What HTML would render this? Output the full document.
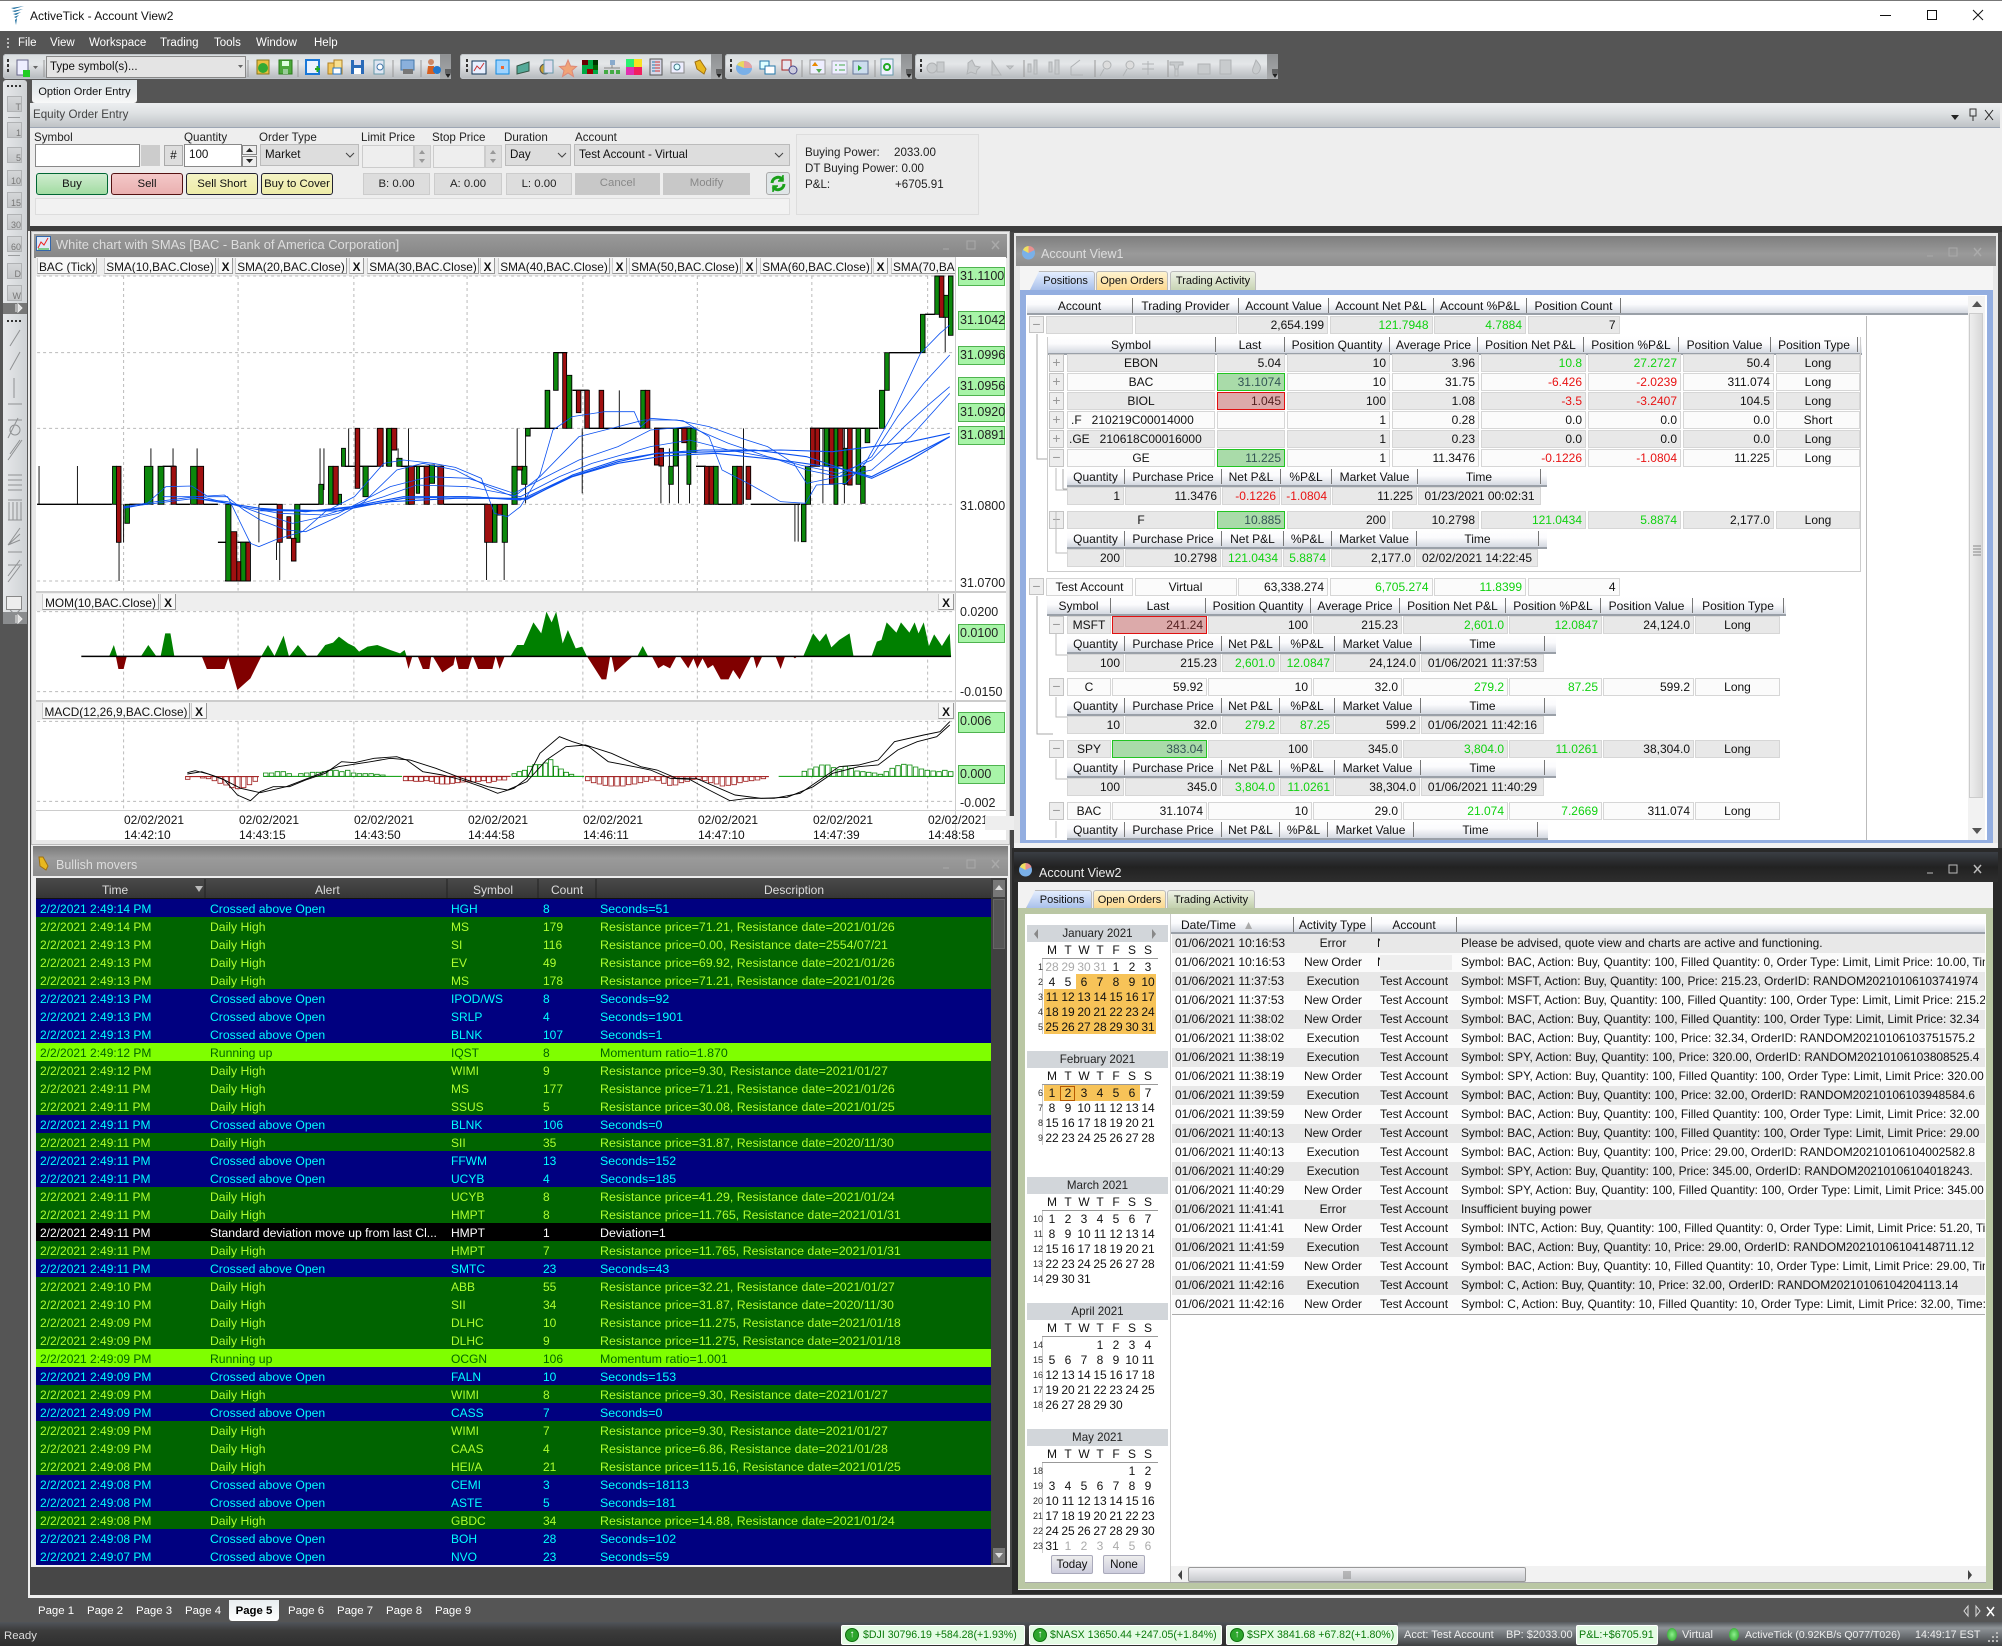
<!DOCTYPE html>
<html><head><meta charset="utf-8"><title>ActiveTick - Account View2</title>
<style>
html,body{margin:0;padding:0}
body{width:2002px;height:1646px;overflow:hidden;position:relative;background:#555;font:12px/16px "Liberation Sans",sans-serif;color:#111}
.a,.t{position:absolute;white-space:nowrap}
.a{display:block}
.tb{position:absolute;top:54px;height:25px;border-radius:3px;background:linear-gradient(#d8dcde,#e4e6e8 40%,#b4b8bc);box-shadow:inset 0 0 0 1px #c0c4c8}
.tb:after{content:"";position:absolute;right:0;top:0;bottom:0;width:11px;background:linear-gradient(#8e9092,#a8aaac)}
.lb{position:absolute;height:16px;line-height:16px;color:#222;font-size:11.6px;white-space:nowrap}
.in{position:absolute;background:#ddd;border:1px solid #bbb;box-sizing:border-box;line-height:20px;padding-left:4px;font-size:11.6px}
.btn{position:absolute;top:173px;height:22px;line-height:20px;box-sizing:border-box;text-align:center;border-radius:3px;font-size:11.4px;white-space:nowrap}
.win{position:absolute;height:26px;line-height:26px;color:#ddd;font-size:12.5px;white-space:nowrap}
.lg{position:absolute;top:258px;height:16px;line-height:18px;background:#f8f8f8;border-right:1px solid #999;border-bottom:1px solid #999;border-left:1px solid #ccc;padding:0 1px;overflow:hidden;box-sizing:border-box;text-align:center;white-space:nowrap;font-size:11.8px}
.lx{font-weight:bold;text-align:center}
.ax{position:absolute;left:960px;line-height:16px;color:#222;font-size:12.5px}
.gb{position:absolute;left:958px;width:47px;height:19px;background:#a8f4a8;border:1px solid #4fb34f;box-sizing:border-box;line-height:17px;padding-left:1px;color:#222;font-size:12.5px}
.dt{position:absolute;text-align:left;line-height:15px;color:#111;white-space:nowrap}
.tab{position:absolute;height:19px;line-height:19px;text-align:center;border:1px solid #bbb;border-bottom:0;box-sizing:border-box;border-radius:3px 3px 0 0;font-size:11px;white-space:nowrap}
.r{height:18px;position:relative;line-height:20px}
.r i{position:absolute;font-style:normal;white-space:nowrap;left:4px}
.r i:nth-child(2){left:174px;font-size:12.2px}.r i:nth-child(3){left:415px}.r i:nth-child(4){left:507px}.r i:nth-child(5){left:564px;font-size:12.4px}
.B{background:#000080;color:#0ff}.G{background:#006400;color:#adff2f}.L{background:#7fff00;color:#006400}.K{background:#000;color:#fff}
.g{position:absolute;display:grid;height:18px;column-gap:2px;left:1067px;line-height:17px}
.g>i{font-style:normal;border:1px solid #d6d6d6;box-sizing:border-box;text-align:right;padding:0 3px;overflow:hidden;white-space:nowrap}
.o{background:#e8e8e8}.e{background:#fbfbfb}
.g.o,.g.e{background:none}
.g.o>i{background:#e8e8e8}.g.e>i{background:#fbfbfb}
.c,.g>i.c{text-align:center}
.g>i.u{color:#0fd20f}.g>i.d{color:#e81212}
.g>i.hg{background:#a9dba9;border-color:#22c422;color:#355}
.g>i.hr{background:#dcaaaa;border-color:#e01010;color:#522}
.h{position:absolute;display:grid;height:17px;left:1067px;line-height:16px;background:linear-gradient(#fff,#fbfbfd 45%,#d4d8e0);border-bottom:2px solid #9aa0a8;box-sizing:content-box}
.h>i{font-style:normal;text-align:center;border-right:1px solid #777;overflow:hidden;white-space:nowrap;height:15px;line-height:17px;margin-top:1px}
.bx{position:absolute;left:1049px;width:15px;height:18px;background:#ededed;border:1px solid #c4c4c4;box-sizing:border-box;color:#999;text-align:center;line-height:15px;font-size:14px}
.cm{position:absolute;left:1027px;width:141px;height:17px;background:#d2d6da;text-align:center;line-height:17px;color:#222;font-size:11.6px}
.cd{position:absolute;left:1044px;width:112px;display:grid;grid-template-columns:repeat(7,16px);text-align:center;line-height:15px;height:15px}
.cd i{font-style:normal}
.cd .m{color:#aaa}
.wk{position:absolute;left:1032px;width:11px;text-align:right;font-size:9px;line-height:15px;color:#333;border-right:0}
.hl{position:absolute;background:#f7c358}
.row2{position:absolute;left:1172px;width:813px;height:19px;line-height:19px;overflow:hidden;white-space:nowrap}
.row2 i{font-style:normal;position:absolute}
.row2 i:nth-child(1){left:3px}.row2 i:nth-child(2){left:122px;width:78px;text-align:center}.row2 i:nth-child(3){left:208px}.row2 i:nth-child(4){left:289px;font-size:11.9px}
.pg{position:absolute;top:1603px;color:#fff;line-height:16px;font-size:11.4px;white-space:nowrap}
.st{position:absolute;top:1625px;height:20px;line-height:20px;color:#fff;white-space:nowrap;font-size:11px}
.sb{background:#e4fbe4;color:#0a7a0a;border-radius:2px;border:1px solid #fff;box-sizing:border-box;line-height:18px;overflow:hidden}
.up{position:absolute;left:3px;top:2px;width:14px;height:14px;border-radius:50%;background:#2da62d;border:1px solid #0e6e0e;box-sizing:border-box;color:#fff;line-height:12px;text-align:center;font-size:10px;font-weight:bold}
.dot{position:absolute;top:1628px;width:10px;height:13px;border-radius:50%;background:radial-gradient(#8ef08e,#1e9a1e)}
.rl{position:absolute;left:7px;width:15px;height:16px;background:linear-gradient(#d4d6d8,#c4c6c8);border:1px solid #b0b2b4;box-sizing:border-box;font-size:9px;line-height:20px;text-align:right;color:#777;overflow:visible}
.hx{position:absolute;left:8px;width:12px;height:1px;background:#9a9c9e}
svg{position:absolute;display:block}
</style></head><body>

<!-- title bar -->
<div class="a" style="left:0;top:0;width:2002px;height:31px;background:#fff;border-top:1px solid #777;box-sizing:border-box"></div>
<svg style="left:9px;top:6px" width="16" height="20" viewBox="0 0 16 20"><path d="M2 2 15 0 5 3zM3 5 14 3 6 6zM4 8 12 6 7 9zM5 11 10 9 7 12zM6 14 8 12 7 19z" fill="#1f6f9f"/></svg>
<div class="t" style="left:30px;top:8px;line-height:16px;color:#111">ActiveTick - Account View2</div>
<div class="a" style="left:1880px;top:15px;width:11px;height:1px;background:#111"></div>
<div class="a" style="left:1927px;top:10px;width:10px;height:10px;border:1px solid #111;box-sizing:border-box"></div>
<svg style="left:1972px;top:9px" width="12" height="12"><path d="M1 1 11 11M11 1 1 11" stroke="#111" fill="none"/></svg>

<!-- menu -->
<svg style="left:7px;top:37px" width="3" height="12"><path d="M1 1v2M1 5v2M1 9v2" stroke="#ddd" stroke-width="1.5"/></svg>
<div class="t" style="left:18px;top:35px;color:#fff;font-size:11.5px">File</div>
<div class="t" style="left:50px;top:35px;color:#fff;font-size:11.5px">View</div>
<div class="t" style="left:89px;top:35px;color:#fff;font-size:11.5px">Workspace</div>
<div class="t" style="left:160px;top:35px;color:#fff;font-size:11.5px">Trading</div>
<div class="t" style="left:214px;top:35px;color:#fff;font-size:11.5px">Tools</div>
<div class="t" style="left:256px;top:35px;color:#fff;font-size:11.5px">Window</div>
<div class="t" style="left:314px;top:35px;color:#fff;font-size:11.5px">Help</div>

<!-- toolbars -->
<div class="tb" style="left:3px;width:448px"></div>
<div class="tb" style="left:460px;width:262px"></div>
<div class="tb" style="left:725px;width:187px"></div>
<div class="tb" style="left:915px;width:363px"></div>
<div class="a" style="left:46px;top:56px;width:200px;height:22px;background:#e4e4e4;border:1px solid #888;box-sizing:border-box;line-height:20px;padding-left:3px;color:#111;font-size:11.5px">Type symbol(s)...</div>
<svg style="left:0;top:50px" width="1300" height="32" viewBox="0 0 1300 32">
<path d="M8 9v3M8 14v3M8 19v3M467 9v3M467 14v3M467 19v3M731 9v3M731 14v3M731 19v3M921 9v3M921 14v3M921 19v3" stroke="#333" stroke-width="2"/>
<path d="M44 10v17M248 10v17M298 10v17M393 10v17M421 10v17M802 10v17M875 10v17M1024 10v17M1095 10v17M1168 10v17" stroke="#999"/>
<path d="M238 15l5 0-2.5 3z" fill="#666"/>
<path d="M445 20h6M445 22h6M446 24l2 3 2-3zM716 20h6M716 22h6M717 24l2 3 2-3zM906 20h6M906 22h6M907 24l2 3 2-3zM1272 20h6M1272 22h6M1273 24l2 3 2-3z" stroke="#222" fill="#222"/>
<rect x="17" y="10" width="11" height="15" fill="#eef" stroke="#668"/><rect x="23" y="20" width="7" height="7" fill="#2c2"/><path d="M33 16h5l-2.5 3z" fill="#666"/>
<rect x="257" y="10" width="12" height="14" fill="#eac040" stroke="#86761c"/><circle cx="263" cy="18" r="5" fill="#3a3"/>
<rect x="279" y="10" width="13" height="14" fill="#4ca83c" stroke="#2a7a1a"/><rect x="282" y="11" width="7" height="5" fill="#dfd"/><rect x="283" y="19" width="5" height="5" fill="#9c9"/>
<rect x="306" y="10" width="13" height="14" fill="#eaf2ff" stroke="#1a78d8" stroke-width="2"/><path d="M315 19h5M317.500 16v6" stroke="#2a2" stroke-width="2"/>
<rect x="328" y="13" width="8" height="11" fill="#f2c860" stroke="#b08020"/><rect x="334" y="10" width="8" height="14" fill="#f8e090" stroke="#b08020"/><rect x="333" y="18" width="8" height="6" fill="#fff" stroke="#27c"/>
<rect x="351" y="10" width="13" height="14" fill="#2a6ab8"/><rect x="354" y="10" width="7" height="5" fill="#dde"/><rect x="354" y="18" width="7" height="6" fill="#fff"/>
<rect x="374" y="10" width="10" height="14" fill="#dfe6f2" stroke="#69a"/><circle cx="380" cy="17" r="3" fill="#fff" stroke="#47a"/>
<rect x="401" y="10" width="13" height="10" fill="#8ab0dc" stroke="#47a"/><rect x="403" y="19" width="10" height="5" fill="#777"/>
<circle cx="431" cy="12" r="3" fill="#c86"/><path d="M427 24l1-8h6l1 8z" fill="#d66020"/><circle cx="437" cy="20" r="4" fill="#27c"/>
<rect x="472" y="11" width="14" height="13" fill="#e8f0ff" stroke="#135"/><path d="M474 21l3-5 3 3 4-6" stroke="#c33" fill="none"/>
<rect x="496" y="10" width="13" height="14" fill="#9fd4ff" stroke="#18d"/><rect x="501" y="16" width="3" height="3" fill="#e63"/>
<path d="M517 16l12-4v9l-12 3z" fill="#5a9" stroke="#354"/>
<circle cx="545" cy="19" r="5" fill="#c8a030" stroke="#555"/><rect x="544" y="10" width="9" height="13" fill="#dde" stroke="#69a"/>
<path d="M568 10l2.500 6 6 .5-4.500 4 1.500 6-5.500-3.500-5.500 3.500 1.500-6-4.500-4 6-.5z" fill="#f0a478" stroke="#d87"/>
<rect x="582" y="10" width="16" height="14" fill="#0a4"/><rect x="582" y="10" width="6" height="5" fill="#600"/><rect x="593" y="15" width="5" height="5" fill="#060"/><rect x="587" y="19" width="6" height="5" fill="#900"/><rect x="593" y="10" width="5" height="5" fill="#030"/>
<rect x="610" y="10" width="5" height="5" fill="#8ac"/><rect x="604" y="20" width="4" height="4" fill="#4a4"/><rect x="610" y="20" width="4" height="4" fill="#4a4"/><rect x="616" y="20" width="4" height="4" fill="#4a4"/><path d="M612 15v3M604 18h16" stroke="#888"/>
<rect x="626" y="9" width="8" height="8" fill="#2cf070"/><rect x="634" y="9" width="8" height="8" fill="#f8e020"/><rect x="626" y="17" width="8" height="8" fill="#e030b0"/><rect x="634" y="17" width="8" height="8" fill="#f02060"/>
<rect x="650" y="9" width="12" height="16" fill="#d8d8e8" stroke="#555"/><path d="M652 12h8M652 15h8M652 18h8M652 21h8" stroke="#c33"/><path d="M652 12h3M652 15h3M652 18h3M652 21h3" stroke="#27a"/>
<rect x="671" y="12" width="13" height="11" fill="#eef" stroke="#888"/><circle cx="677" cy="17" r="3" fill="#dff" stroke="#478"/>
<path d="M695 12l5-2 6 9-2 5-7-5z" fill="#e8b820" stroke="#a07010"/>
<ellipse cx="744" cy="18" rx="8" ry="7" fill="#7ab0e8"/><path d="M744 18V11a8 7 0 0 1 8 7z" fill="#e6a0a0"/><path d="M744 18l-7-3a8 7 0 0 1 7-4z" fill="#e8d860"/>
<rect x="760" y="11" width="9" height="8" fill="#dff" stroke="#27a"/><rect x="765" y="16" width="10" height="8" fill="#fff" stroke="#27a"/>
<rect x="782" y="10" width="9" height="10" fill="#e6e6f0" stroke="#a22"/><circle cx="793" cy="20" r="4" fill="#ccd" stroke="#448"/>
<rect x="810" y="10" width="15" height="14" fill="#eef" stroke="#999"/><path d="M815 12l3 4h-6zM819 23l3-4h-6z" fill="#5a5"/><path d="M815 12l3 4h-6z" fill="#e80"/>
<rect x="832" y="11" width="15" height="13" fill="#eef" stroke="#aab"/><path d="M835 15h2M839 15h6M835 20h2M839 20h6" stroke="#4a4"/>
<rect x="853" y="11" width="15" height="13" fill="#cde" stroke="#679"/><path d="M858 15l4 3-4 3z" fill="#2a2"/>
<rect x="881" y="9" width="12" height="16" fill="#eef" stroke="#69a"/><circle cx="887" cy="17" r="3" fill="none" stroke="#2a2" stroke-width="2"/>
<g fill="#c8cbcd" stroke="#b0b3b5">
<circle cx="932" cy="18" r="5"/><rect x="937" y="12" width="7" height="10"/>
<path d="M968 13l4-3 3 6 5 1-3 3-1 4-5-2-4 2 1-5z"/>
<path d="M992 25v-14l9 14zM1007 16h6l-3 3z"/>
<rect x="1028" y="14" width="3" height="8"/><rect x="1034" y="10" width="3" height="14"/>
<rect x="1049" y="12" width="3" height="10"/><rect x="1055" y="10" width="4" height="14"/>
<path d="M1071 25v-8l9-7" fill="none"/><path d="M1071 25h12" fill="none"/>
<circle cx="1107" cy="15" r="4" fill="#ddd"/><path d="M1104 19l-4 7" fill="none"/>
<circle cx="1130" cy="15" r="4" fill="#ddd"/><path d="M1127 19l-4 7" fill="none"/>
<path d="M1142 14h12M1142 19h12M1148 11v14" fill="none"/>
<path d="M1170 12h13v3h-4l-1 4h-3l-1-4h-4zM1175 19h3v7h-3z"/>
<rect x="1198" y="14" width="12" height="10"/><rect x="1220" y="10" width="11" height="14"/>
<path d="M1256 10c4 5 6 7 3 12-3 4-8 1-6-4z"/>
</g>
</svg>

<!-- left rail -->
<div class="a" style="left:3px;top:80px;width:24px;height:228px;background:linear-gradient(90deg,#e6e8ea,#cfd2d5);border-radius:3px 3px 0 0"></div>
<div class="a" style="left:3px;top:303px;width:24px;height:11px;background:#777"></div>
<div class="a" style="left:3px;top:314px;width:24px;height:298px;background:linear-gradient(90deg,#e6e8ea,#cfd2d5)"></div>
<div class="a" style="left:3px;top:612px;width:24px;height:13px;background:#8a8c8e"></div>
<svg style="left:7px;top:85px" width="16" height="3"><path d="M0 1h2M4 1h2M8 1h2M12 1h2" stroke="#333" stroke-width="2"/></svg>
<svg style="left:7px;top:320px" width="16" height="3"><path d="M0 1h2M4 1h2M8 1h2M12 1h2" stroke="#333" stroke-width="2"/></svg>
<div class="rl" style="top:96px">T</div><div class="rl" style="top:122px">1</div><div class="rl" style="top:147px">5</div><div class="rl" style="top:170px">10</div><div class="rl" style="top:192px">15</div><div class="rl" style="top:214px">30</div><div class="rl" style="top:236px">60</div><div class="rl" style="top:263px">D</div><div class="rl" style="top:285px">W</div>
<div class="hx" style="top:117px"></div><div class="hx" style="top:255px"></div>
<svg style="left:4px;top:320px" width="22" height="310" viewBox="0 0 22 310" fill="none" stroke="#8f9193">
<path d="M6 26 16 10M6 50 16 32M10 58V78M4 84h14M4 100h14M4 118 14 98M6 110a5 5 0 1 0 10 0a5 5 0 1 0-10 0M4 140l14-20M6 134l10-14M4 155h14M4 160h14M4 165h14M4 170h14M4 180h14M4 200h14M5 182v18M9 182v18M13 182v18M17 182v18M4 225 16 208M4 225 16 214M4 225 16 220M4 232h14M4 245h14M4 256 16 240M4 262 16 246M4 278h14"/>
<circle cx="11" cy="288" r="5"/>
</svg>
<div class="a" style="left:6px;top:596px;width:16px;height:14px;background:#eee;border:1px solid #888;box-sizing:border-box"></div>
<svg style="left:15px;top:303px" width="8" height="10"><path d="M1 1v8M3 1l4 4-4 4z" stroke="#eee" fill="#ddd"/></svg>
<svg style="left:15px;top:614px" width="8" height="10"><path d="M1 1v8M3 1l4 4-4 4z" stroke="#eee" fill="#ddd"/></svg>

<!-- option tab -->
<div class="a" style="left:32px;top:80px;width:105px;height:23px;background:linear-gradient(#dfe6ea,#e8ecee 50%,#f8f8f8);text-align:center;line-height:24px;border-radius:0 0 3px 3px;color:#111;font-size:11px">Option Order Entry</div>

<!-- equity panel -->
<div class="a" style="left:30px;top:103px;width:1972px;height:123px;background:#eee"></div>
<div class="a" style="left:30px;top:103px;width:1970px;height:25px;background:linear-gradient(#eceef0,#dfe2e4 40%,#bfc3c6);border-bottom:1px solid #9da6b4;box-sizing:border-box"></div>
<div class="t" style="left:33px;top:107px;color:#444;font-size:11.6px">Equity Order Entry</div>
<svg style="left:1950px;top:108px" width="45" height="14" fill="#222"><path d="M1 7h8l-4 5z"/><path d="M20 1h6v7h-6zM23 8v5" stroke="#333" fill="none"/><path d="M35 2l8 10M43 2l-8 10" stroke="#222" fill="none"/></svg>

<div class="lb" style="left:34px;top:130px">Symbol</div>
<div class="lb" style="left:184px;top:130px">Quantity</div>
<div class="lb" style="left:259px;top:130px">Order Type</div>
<div class="lb" style="left:361px;top:130px">Limit Price</div>
<div class="lb" style="left:432px;top:130px">Stop Price</div>
<div class="lb" style="left:504px;top:130px">Duration</div>
<div class="lb" style="left:575px;top:130px">Account</div>

<div class="in" style="left:35px;top:144px;width:105px;height:23px;background:#fff;border-color:#888"></div>
<div class="in" style="left:141px;top:145px;width:19px;height:21px;background:#ccc;border-color:#ccc"></div>
<div class="in" style="left:164px;top:145px;width:19px;height:21px;background:#ddd;text-align:center;padding:0;border-color:#aaa">#</div>
<div class="in" style="left:184px;top:144px;width:58px;height:23px;background:#fff;border-color:#888">100</div>
<div class="in" style="left:242px;top:145px;width:15px;height:10px;background:#eee;border-color:#888"></div><div class="in" style="left:242px;top:156px;width:15px;height:11px;background:#eee;border-color:#888"></div>
<svg style="left:242px;top:145px" width="15" height="22"><path d="M4 7l3.500-4 3.500 4zM4 14l3.500 4 3.500-4z" fill="#222"/></svg>
<div class="in" style="left:260px;top:144px;width:99px;height:22px;background:#ddd">Market</div>
<div class="in" style="left:362px;top:145px;width:52px;height:23px;background:#eee;border-color:#ccc"></div><div class="in" style="left:414px;top:145px;width:17px;height:23px;background:#ddd;border-color:#ccc"></div>
<div class="in" style="left:433px;top:145px;width:52px;height:23px;background:#eee;border-color:#ccc"></div><div class="in" style="left:485px;top:145px;width:17px;height:23px;background:#ddd;border-color:#ccc"></div>
<svg style="left:414px;top:145px" width="90" height="23"><path d="M5 9l3-4 3 4zM5 14l3 4 3-4zM76 9l3-4 3 4zM76 14l3 4 3-4z" fill="#999"/></svg>
<div class="in" style="left:505px;top:144px;width:66px;height:22px;background:#ddd">Day</div>
<div class="in" style="left:574px;top:144px;width:216px;height:22px;background:#ddd">Test Account - Virtual</div>
<svg style="left:340px;top:150px" width="460" height="10" fill="none" stroke="#444"><path d="M6 3l4 4 4-4M218 3l4 4 4-4M435 3l4 4 4-4"/></svg>

<div class="btn" style="left:36px;width:72px;background:linear-gradient(#cfeccf,#a2dca2);border:1px solid #063;color:#111">Buy</div>
<div class="btn" style="left:111px;width:72px;background:linear-gradient(#f3c8c8,#eab0b0);border:1px solid #511;color:#111">Sell</div>
<div class="btn" style="left:186px;width:72px;background:linear-gradient(#f4f3c4,#eeeca8);border:1px solid #223;color:#111">Sell Short</div>
<div class="btn" style="left:261px;width:72px;background:linear-gradient(#f4f3c4,#eeeca8);border:1px solid #223;color:#111">Buy to Cover</div>
<div class="btn" style="left:363px;width:67px;background:#ddd;border:1px solid #ccc;border-radius:0;color:#222">B: 0.00</div>
<div class="btn" style="left:434px;width:68px;background:#ddd;border:1px solid #ccc;border-radius:0;color:#222">A: 0.00</div>
<div class="btn" style="left:506px;width:66px;background:#ddd;border:1px solid #ccc;border-radius:0;color:#222">L: 0.00</div>
<div class="btn" style="left:575px;width:85px;background:#c8c8c8;border-radius:0;color:#888">Cancel</div>
<div class="btn" style="left:663px;width:87px;background:#c8c8c8;border-radius:0;color:#888">Modify</div>
<div class="a" style="left:766px;top:172px;width:24px;height:23px;background:#e0e6e8;border:1px solid #aaa;box-sizing:border-box;border-radius:3px"></div>
<svg style="left:770px;top:175px" width="16" height="17" fill="none" stroke="#1aa01a" stroke-width="3"><path d="M2 8a6 6 0 0 1 11-3M14 9a6 6 0 0 1-11 3"/><path d="M13 0v6h-5M3 17v-6h5" stroke-width="1.500" fill="#1aa01a"/></svg>
<div class="a" style="left:35px;top:198px;width:755px;height:17px;background:#f2f2f2;border:1px solid #ddd;box-sizing:border-box"></div>
<div class="a" style="left:796px;top:134px;width:183px;height:81px;background:#ececec;border:1px solid #ddd;box-sizing:border-box"></div>
<div class="lb" style="left:805px;top:145px">Buying Power:</div><div class="lb" style="left:894px;top:145px">2033.00</div>
<div class="lb" style="left:805px;top:161px">DT Buying Power: 0.00</div>
<div class="lb" style="left:805px;top:177px">P&amp;L:</div><div class="lb" style="left:895px;top:177px">+6705.91</div>

<!-- MDI frame -->
<div class="a" style="left:30px;top:226px;width:1972px;height:1371px;background:#474747"></div>
<div class="a" style="left:28px;top:231px;width:2px;height:1366px;background:#eee"></div>
<div class="a" style="left:28px;top:1595px;width:1974px;height:3px;background:#eee"></div>
<div class="a" style="left:0;top:624px;width:28px;height:1000px;background:#555"></div>
<div class="a" style="left:30px;top:226px;width:1972px;height:6px;background:#3c3c3c"></div>

<!-- chart window -->
<div class="a" style="left:31px;top:231px;width:979px;height:614px;background:#e8e8e8;box-shadow:inset 0 0 0 1px #bbb"></div>
<div class="a" style="left:34px;top:234px;width:973px;height:24px;background:linear-gradient(#999,#868686)"></div>
<svg style="left:36px;top:236px" width="15" height="15"><rect x=".5" y=".5" width="14" height="14" fill="#dfe9f8" stroke="#36a"/><path d="M2 12l3-6 3 3 4-7" stroke="#e22" fill="none"/><path d="M2 13h11" stroke="#2a2"/></svg>
<div class="win" style="left:56px;top:232px;color:#ddd;font-size:12.9px">White chart with SMAs [BAC - Bank of America Corporation]</div>
<svg style="left:940px;top:238px" width="62" height="14" stroke="#aaa" fill="none"><path d="M3 11h6"/><rect x="27" y="3" width="8" height="8"/><path d="M52 3l7 8M59 3l-7 8" stroke-width="1.500"/></svg>

<div class="a" style="left:36px;top:257px;width:970px;height:583px;background:#fff"></div>
<div class="a" style="left:36px;top:257px;width:919px;height:19px;background:#eee"></div>
<div class="lg" style="left:37px;width:60px">BAC (Tick)</div>
<div class="lg" style="left:104px;width:112px">SMA(10,BAC.Close)</div><div class="lg lx" style="left:218px;width:15px">X</div>
<div class="lg" style="left:235px;width:112px">SMA(20,BAC.Close)</div><div class="lg lx" style="left:349px;width:15px">X</div>
<div class="lg" style="left:367px;width:112px">SMA(30,BAC.Close)</div><div class="lg lx" style="left:480px;width:15px">X</div>
<div class="lg" style="left:498px;width:112px">SMA(40,BAC.Close)</div><div class="lg lx" style="left:612px;width:15px">X</div>
<div class="lg" style="left:629px;width:112px">SMA(50,BAC.Close)</div><div class="lg lx" style="left:742px;width:15px">X</div>
<div class="lg" style="left:760px;width:112px">SMA(60,BAC.Close)</div><div class="lg lx" style="left:873px;width:15px">X</div>
<div class="lg" style="left:891px;width:64px;text-align:left;border-right:0">SMA(70,BAC.Close)</div>

<svg style="left:0;top:230px" width="1020" height="370" viewBox="0 0 1568 1110" preserveAspectRatio="none">
<path vector-effect="non-scaling-stroke" fill="none" stroke="#bbb" stroke-dasharray="3 3" d="M57 138H1468M57 368H1468M57 595H1468M57 823H1468M57 1053H1468M190 138V1082M366 138V1082M544 138V1082M718 138V1082M896 138V1082M1072 138V1082M1248 138V1082M1426 138V1082"/>
<path vector-effect="non-scaling-stroke" fill="none" stroke="#000" stroke-width=".9" d="M60 708V823M119 708V823M183 937V1053M190 823V937M232 655V709M266 655V709M303 655V709M398 823V937M430 937V1050M425 937V990M492 655V823M498 655V780M536 595V709M550 595V775M594 595V709M612 655V709M628 595V709M748 937V1050M775 937V1050M795 595V709M808 595V820M845 481V595M895 595V790M925 481V595M952 481V595M1016 655V820M1029 655V820M1043 595V820M1060 595V820M1143 595V823M1222 823V935M1227 823V935M1265 595V820M1298 595V820M1453 253V366"/>
<path vector-effect="non-scaling-stroke" fill="none" stroke="#000" stroke-width="1.300" d="M57 823H172M199 823H222M250 709H270M271 823H292M313 823H335M335 937H347M398 823H426M461 823H490M530 709H580M682 823H750M815 595H838M880 481H905M905 595H985M1070 709H1085M1104 823H1125M1154 823H1230M1337 595H1350M1367 368H1415M1422 253H1437M616 709H680M346 1052H385M365 937H385M1006 595H1070M1245 595H1338M851 368H872M836 595H858"/>
<path vector-effect="non-scaling-stroke" fill="#0c880c" stroke="#000" stroke-width=".9" d="M173 709h6v114h-6zM192 823h7v57h-7zM222 709h13v114h-13zM243 709h9v114h-9zM293 709h10v114h-10zM347 823h8v230h-8zM370 937h8v116h-8zM453 823h8v114h-8zM490 763h7v60h-7zM505 709h7v114h-7zM518 793h7v30h-7zM525 655h6v54h-6zM558 709h8v91h-8zM595 595h7v114h-7zM610 685h8v24h-8zM624 709h6v114h-6zM640 709h5v81h-5zM660 705h8v55h-8zM757 823h7v114h-7zM772 823h8v114h-8zM787 709h8v114h-8zM802 709h8v54h-8zM808 595h7v23h-7zM838 481h7v114h-7zM851 368h7v113h-7zM871 436h8v159h-8zM985 481h7v114h-7zM1028 709h7v54h-7zM1035 595h7v113h-7zM1056 595h6v168h-6zM1062 595h8v73h-8zM1097 709h7v114h-7zM1126 709h7v114h-7zM1232 823h7v112h-7zM1238 709h8v114h-8zM1267 595h7v114h-7zM1282 595h6v228h-6zM1296 655h6v108h-6zM1316 595h7v168h-7zM1323 709h7v111h-7zM1330 595h7v43h-7zM1352 481h8v114h-8zM1360 368h7v113h-7zM1415 253h7v115h-7zM1437 138h7v115h-7zM1450 196h8v66h-8zM1458 138h7v178h-7z"/>
<path vector-effect="non-scaling-stroke" fill="#a01010" stroke="#000" stroke-width=".9" d="M179 709h7v228h-7zM263 709h8v114h-8zM303 709h10v114h-10zM355 905h9v148h-9zM364 995h6v58h-6zM378 937h7v116h-7zM426 823h8v114h-8zM441 860h6v65h-6zM448 925h7v68h-7zM512 709h8v114h-8zM546 595h7v180h-7zM580 595h9v114h-9zM602 595h8v65h-8zM628 709h9v114h-9zM652 709h8v114h-8zM673 709h9v114h-9zM745 823h12v114h-12zM765 823h7v32h-7zM795 709h8v11h-8zM865 368h6v227h-6zM886 481h7v67h-7zM899 481h7v114h-7zM921 481h7v114h-7zM992 481h7v114h-7zM1006 595h7v110h-7zM1013 655h7v53h-7zM1048 595h8v43h-8zM1083 709h7v114h-7zM1090 709h7v114h-7zM1133 709h8v114h-8zM1147 709h7v99h-7zM1246 595h7v114h-7zM1253 595h7v114h-7zM1275 595h7v168h-7zM1288 595h8v113h-8zM1303 595h7v170h-7zM1444 138h7v124h-7z"/>
<g fill="none" stroke="#0a50f0" stroke-width=".8">
<polyline vector-effect="non-scaling-stroke" points="190,835 225,822 255,770 295,768 320,800 350,800 385,940 398,950 425,928 465,905 500,845 545,800 590,700 620,690 665,700 700,712 740,745 760,850 780,860 800,830 830,735 850,600 880,560 930,545 975,545 985,590 1000,565 1050,572 1090,620 1110,720 1150,760 1200,815 1238,820 1255,765 1300,760 1330,700 1370,560 1415,370 1445,310 1460,285"/>
<polyline vector-effect="non-scaling-stroke" points="190,830 240,815 300,800 345,795 375,840 400,870 440,900 470,905 520,860 560,815 610,720 650,700 700,720 750,770 790,800 830,740 860,680 890,620 930,600 990,570 1040,570 1090,590 1140,625 1180,650 1220,700 1240,760 1290,740 1340,680 1380,560 1420,460 1460,375"/>
<polyline vector-effect="non-scaling-stroke" points="190,832 300,805 350,815 400,850 450,880 520,850 600,770 660,740 720,745 790,790 840,740 890,690 950,650 1000,600 1060,590 1120,640 1180,680 1230,705 1290,730 1340,690 1390,590 1430,520 1460,470"/>
<polyline vector-effect="non-scaling-stroke" points="250,800 310,800 370,830 430,850 500,855 590,800 640,765 720,770 800,800 860,740 910,700 1000,650 1060,630 1120,660 1190,685 1240,720 1290,740 1340,720 1400,620 1460,490"/>
<polyline vector-effect="non-scaling-stroke" stroke-width="1.100" points="300,805 400,835 470,845 540,830 620,800 720,800 800,810 870,745 950,695 1010,670 1080,660 1160,660 1240,680 1300,720 1340,745 1400,690 1460,620"/>
<polyline vector-effect="non-scaling-stroke" stroke-width="1.100" points="400,838 500,842 600,815 700,805 810,805 880,740 950,700 1020,678 1100,670 1200,690 1290,715 1340,740 1400,680 1460,620"/>
<polyline vector-effect="non-scaling-stroke" stroke-width="1.100" points="400,842 520,843 620,805 710,800 810,808 880,735 950,690 1010,670 1100,665 1200,660 1280,665 1340,650 1400,635 1460,610"/>
</g>
</svg>
<div class="a" style="left:955px;top:257px;width:1px;height:583px;background:#ccc"></div>
<div class="gb" style="top:267px">31.1100</div>
<div class="gb" style="top:311px">31.1042</div>
<div class="gb" style="top:346px">31.0996</div>
<div class="gb" style="top:377px">31.0956</div>
<div class="gb" style="top:403px">31.0920</div>
<div class="gb" style="top:426px">31.0891</div>
<div class="ax" style="top:498px">31.0800</div>
<div class="ax" style="top:575px">31.0700</div>
<div class="a" style="left:36px;top:591px;width:970px;height:2px;background:#ccc"></div>

<!-- MOM & MACD -->
<div class="a" style="left:36px;top:593px;width:919px;height:18px;background:#eee"></div>
<div class="lg" style="left:42px;top:594px;width:117px">MOM(10,BAC.Close)</div><div class="lg lx" style="left:160px;top:594px;width:16px">X</div>
<div class="lg lx" style="left:938px;top:594px;width:16px">X</div>
<div class="a" style="left:36px;top:700px;width:970px;height:2px;background:#ccc"></div>
<div class="a" style="left:36px;top:702px;width:919px;height:18px;background:#eee"></div>
<div class="lg" style="left:42px;top:703px;width:148px">MACD(12,26,9,BAC.Close)</div><div class="lg lx" style="left:191px;top:703px;width:16px">X</div>
<div class="lg lx" style="left:938px;top:703px;width:16px">X</div>
<svg style="left:0;top:590px" width="1020" height="330" viewBox="0 0 1568 990" preserveAspectRatio="none">
<path vector-effect="non-scaling-stroke" fill="none" stroke="#bbb" stroke-dasharray="3 3" d="M57 65H1468M57 305H1468M57 394H1468M57 634H1468M190 65V330M366 65V330M544 65V330M718 65V330M896 65V330M1072 65V330M1248 65V330M1426 65V330M190 394V660M366 394V660M544 394V660M718 394V660M896 394V660M1072 394V660M1248 394V660M1426 394V660"/>
<path fill="#008000" d="M168 198L175 165 180 198zM217 198L228 165 240 198zM247 198L254 130 262 130 268 198zM402 198L412 165 422 198 436 137 444 198zM445 198L458 165 472 198zM487 198L500 165 512 158 521 140 535 160 545 170 552 185 565 170 580 165 600 180 615 190 622 180 625 198zM785 198L795 165 805 165 820 97 832 130 840 65 848 97 855 65 865 160 873 120 885 175 895 170 902 198zM980 198L988 168 996 198zM1235 198L1250 130 1260 155 1270 130 1278 172 1290 150 1306 130 1312 198zM1340 198L1348 155 1355 150 1363 97 1378 128 1385 97 1398 128 1406 97 1412 130 1420 97 1428 168 1436 133 1448 168 1460 130 1462 198z"/>
<path fill="#800000" d="M178 198L182 237 190 237 195 198zM310 198L318 237 345 237 352 198zM350 198L365 300 385 265 402 198zM623 198L628 237 634 198zM642 198L650 237 660 237 663 198zM665 198L680 247 697 225 700 198zM700 198L705 237 720 237 726 198zM727 198L735 237 757 237 762 198zM762 198L768 237 776 198zM902 198L925 268 932 268 938 198zM940 198L945 247 972 200zM1002 198L1012 235 1020 225 1030 235 1040 198zM1045 198L1058 235 1066 205 1072 235 1080 205 1088 235 1096 225 1108 268 1120 268 1127 240 1137 268 1155 198zM1158 198L1163 235 1172 198zM1192 198L1200 237 1207 198zM1218 198L1222 205 1226 198z"/>
<path vector-effect="non-scaling-stroke" d="M125 199H1462" stroke="#000" stroke-width="1.500" fill="none"/>
<path vector-effect="non-scaling-stroke" d="M285 560H398M620 559H785M900 560H1182" stroke="#900" fill="none"/>
<path vector-effect="non-scaling-stroke" d="M405 559H618M787 559H898M1197 559H1465" stroke="#090" fill="none"/>
<path vector-effect="non-scaling-stroke" fill="#fff" stroke="#a02020" stroke-width=".8" d="M285 560v8h7v-8zM308 560v4h7v-4zM317 560v6h7v-6zM326 560v12h7v-12zM335 560v20h7v-20zM344 560v25h7v-25zM353 560v33h7v-33zM362 560v36h7v-36zM371 560v33h7v-33zM380 560v24h7v-24zM389 560v14h7v-14zM620 560v12h7v-12zM628 560v12h7v-12zM636 560v14h7v-14zM644 560v14h7v-14zM652 560v12h7v-12zM660 560v14h7v-14zM668 560v20h7v-20zM676 560v22h7v-22zM684 560v22h7v-22zM692 560v20h7v-20zM700 560v18h7v-18zM708 560v16h7v-16zM716 560v14h7v-14zM724 560v16h7v-16zM732 560v14h7v-14zM740 560v12h7v-12zM748 560v18h7v-18zM756 560v14h7v-14zM764 560v10h7v-10zM772 560v10h7v-10zM900 560v12h7v-12zM909 560v18h7v-18zM918 560v22h7v-22zM927 560v26h7v-26zM936 560v28h7v-28zM945 560v28h7v-28zM954 560v28h7v-28zM963 560v24h7v-24zM972 560v22h7v-22zM981 560v18h7v-18zM990 560v14h7v-14zM999 560v10h7v-10zM1008 560v12h7v-12zM1017 560v20h7v-20zM1026 560v26h7v-26zM1035 560v25h7v-25zM1044 560v18h7v-18zM1053 560v14h7v-14zM1062 560v8h7v-8zM1071 560v8h7v-8zM1080 560v12h7v-12zM1089 560v18h7v-18zM1098 560v22h7v-22zM1107 560v28h7v-28zM1116 560v26h7v-26zM1125 560v24h7v-24zM1134 560v18h7v-18zM1143 560v14h7v-14zM1152 560v12h7v-12zM1161 560v10h7v-10zM1170 560v6h7v-6z"/>
<path vector-effect="non-scaling-stroke" fill="#fff" stroke="#0a8a0a" stroke-width=".8" d="M405 559v-10h7v10zM414 559v-10h7v10zM423 559v-14h7v14zM432 559v-14h7v14zM441 559v-8h7v8zM459 559v-8h7v8zM468 559v-10h7v10zM477 559v-12h7v12zM486 559v-12h7v12zM495 559v-14h7v14zM504 559v-18h7v18zM513 559v-18h7v18zM522 559v-14h7v14zM531 559v-18h7v18zM540 559v-10h7v10zM549 559v-8h7v8zM558 559v-8h7v8zM567 559v-8h7v8zM576 559v-6h7v6zM585 559v-4h7v4zM787 559v-8h7v8zM795 559v-14h7v14zM803 559v-18h7v18zM811 559v-30h7v30zM819 559v-35h7v35zM827 559v-35h7v35zM835 559v-40h7v40zM843 559v-50h7v50zM851 559v-30h7v30zM859 559v-22h7v22zM867 559v-12h7v12zM875 559v-6h7v6zM1233 559v-15h7v15zM1242 559v-22h7v22zM1251 559v-28h7v28zM1260 559v-34h7v34zM1269 559v-34h7v34zM1278 559v-26h7v26zM1287 559v-20h7v20zM1296 559v-30h7v30zM1305 559v-24h7v24zM1314 559v-16h7v16zM1323 559v-14h7v14zM1332 559v-12h7v12zM1341 559v-10h7v10zM1350 559v-6h7v6zM1359 559v-14h7v14zM1368 559v-24h7v24zM1377 559v-32h7v32zM1386 559v-36h7v36zM1395 559v-34h7v34zM1404 559v-28h7v28zM1413 559v-22h7v22zM1422 559v-18h7v18zM1431 559v-16h7v16zM1440 559v-14h7v14zM1449 559v-18h7v18zM1458 559v-14h7v14z"/>
<polyline vector-effect="non-scaling-stroke" fill="none" stroke="#000" stroke-width=".9" points="288,548 300,542 320,552 345,570 365,615 385,632 400,605 420,590 445,590 470,570 500,550 525,515 545,518 575,505 610,500 625,510 650,545 680,555 710,570 740,590 765,610 790,595 810,565 830,490 860,440 880,455 905,470 935,515 975,530 1000,540 1030,565 1060,568 1090,600 1122,632 1150,625 1190,625 1230,610 1260,570 1290,530 1320,525 1350,510 1375,455 1420,435 1445,425 1460,395"/>
<polyline vector-effect="non-scaling-stroke" fill="none" stroke="#000" stroke-width=".9" points="288,552 310,545 340,565 370,595 400,608 440,590 480,560 520,530 570,515 600,505 630,510 670,535 710,565 750,590 780,600 810,575 840,510 870,470 900,465 940,490 985,530 1010,540 1040,565 1070,565 1100,590 1130,615 1170,625 1210,622 1250,590 1280,550 1320,530 1350,525 1380,480 1410,455 1440,440 1460,405"/>
</svg>
<div class="ax" style="top:604px">0.0200</div>
<div class="gb" style="top:624px;width:47px">0.0100</div>
<div class="ax" style="top:684px">-0.0150</div>
<div class="gb" style="top:712px;height:21px">0.006</div>
<div class="gb" style="top:765px">0.000</div>
<div class="ax" style="top:795px">-0.002</div>
<div class="a" style="left:36px;top:810px;width:970px;height:1px;background:#ccc"></div>
<div class="dt" style="left:124px;top:813px">02/02/2021<br>14:42:10</div>
<div class="dt" style="left:239px;top:813px">02/02/2021<br>14:43:15</div>
<div class="dt" style="left:354px;top:813px">02/02/2021<br>14:43:50</div>
<div class="dt" style="left:468px;top:813px">02/02/2021<br>14:44:58</div>
<div class="dt" style="left:583px;top:813px">02/02/2021<br>14:46:11</div>
<div class="dt" style="left:698px;top:813px">02/02/2021<br>14:47:10</div>
<div class="dt" style="left:813px;top:813px">02/02/2021<br>14:47:39</div>
<div class="dt" style="left:928px;top:813px">02/02/2021<br>14:48:58</div>
<div class="a" style="left:985px;top:816px;width:50px;height:14px;background:#eee"></div>

<!-- bullish movers -->
<div class="a" style="left:31px;top:845px;width:979px;height:722px;background:#eee"></div>
<div class="a" style="left:33px;top:846px;width:975px;height:30px;background:linear-gradient(#7b7b7b,#9a9a9a 40%,#8e8e8e)"></div>
<svg style="left:36px;top:855px" width="15" height="17"><path d="M3 2l4 0 5 9-2 4-6-4z" fill="#e8b820" stroke="#a07010"/></svg>
<div class="win" style="left:56px;top:852px">Bullish movers</div>
<svg style="left:940px;top:857px" width="62" height="14" stroke="#aaa" fill="none"><path d="M3 11h6"/><rect x="27" y="3" width="8" height="8"/><path d="M52 3l7 8M59 3l-7 8" stroke-width="1.500"/></svg>
<div class="a" style="left:36px;top:878px;width:971px;height:21px;background:linear-gradient(#4a4a4a,#353535);color:#ddd;line-height:20px;border-bottom:1px solid #111;box-sizing:border-box"></div>
<div class="t" style="left:102px;top:882px;color:#ddd">Time</div>
<svg style="left:194px;top:885px" width="10" height="8"><path d="M1 1h8L5 7z" fill="#bbb"/></svg>
<div class="t" style="left:315px;top:882px;color:#ddd">Alert</div>
<div class="t" style="left:473px;top:882px;color:#ddd">Symbol</div>
<div class="t" style="left:551px;top:882px;color:#ddd">Count</div>
<div class="t" style="left:764px;top:882px;color:#ddd">Description</div>
<svg style="left:200px;top:879px" width="400" height="19" stroke="#222"><path d="M5 0v19M247 0v19M338 0v19M396 0v19"/></svg>
<div class="a" style="left:36px;top:899px;width:955px;height:666px;overflow:hidden">
<div class="r B"><i>2/2/2021 2:49:14 PM</i><i>Crossed above Open</i><i>HGH</i><i>8</i><i>Seconds=51</i></div>
<div class="r G"><i>2/2/2021 2:49:14 PM</i><i>Daily High</i><i>MS</i><i>179</i><i>Resistance price=71.21, Resistance date=2021/01/26</i></div>
<div class="r G"><i>2/2/2021 2:49:13 PM</i><i>Daily High</i><i>SI</i><i>116</i><i>Resistance price=0.00, Resistance date=2554/07/21</i></div>
<div class="r G"><i>2/2/2021 2:49:13 PM</i><i>Daily High</i><i>EV</i><i>49</i><i>Resistance price=69.92, Resistance date=2021/01/26</i></div>
<div class="r G"><i>2/2/2021 2:49:13 PM</i><i>Daily High</i><i>MS</i><i>178</i><i>Resistance price=71.21, Resistance date=2021/01/26</i></div>
<div class="r B"><i>2/2/2021 2:49:13 PM</i><i>Crossed above Open</i><i>IPOD/WS</i><i>8</i><i>Seconds=92</i></div>
<div class="r B"><i>2/2/2021 2:49:13 PM</i><i>Crossed above Open</i><i>SRLP</i><i>4</i><i>Seconds=1901</i></div>
<div class="r B"><i>2/2/2021 2:49:13 PM</i><i>Crossed above Open</i><i>BLNK</i><i>107</i><i>Seconds=1</i></div>
<div class="r L"><i>2/2/2021 2:49:12 PM</i><i>Running up</i><i>IQST</i><i>8</i><i>Momentum ratio=1.870</i></div>
<div class="r G"><i>2/2/2021 2:49:12 PM</i><i>Daily High</i><i>WIMI</i><i>9</i><i>Resistance price=9.30, Resistance date=2021/01/27</i></div>
<div class="r G"><i>2/2/2021 2:49:11 PM</i><i>Daily High</i><i>MS</i><i>177</i><i>Resistance price=71.21, Resistance date=2021/01/26</i></div>
<div class="r G"><i>2/2/2021 2:49:11 PM</i><i>Daily High</i><i>SSUS</i><i>5</i><i>Resistance price=30.08, Resistance date=2021/01/25</i></div>
<div class="r B"><i>2/2/2021 2:49:11 PM</i><i>Crossed above Open</i><i>BLNK</i><i>106</i><i>Seconds=0</i></div>
<div class="r G"><i>2/2/2021 2:49:11 PM</i><i>Daily High</i><i>SII</i><i>35</i><i>Resistance price=31.87, Resistance date=2020/11/30</i></div>
<div class="r B"><i>2/2/2021 2:49:11 PM</i><i>Crossed above Open</i><i>FFWM</i><i>13</i><i>Seconds=152</i></div>
<div class="r B"><i>2/2/2021 2:49:11 PM</i><i>Crossed above Open</i><i>UCYB</i><i>4</i><i>Seconds=185</i></div>
<div class="r G"><i>2/2/2021 2:49:11 PM</i><i>Daily High</i><i>UCYB</i><i>8</i><i>Resistance price=41.29, Resistance date=2021/01/24</i></div>
<div class="r G"><i>2/2/2021 2:49:11 PM</i><i>Daily High</i><i>HMPT</i><i>8</i><i>Resistance price=11.765, Resistance date=2021/01/31</i></div>
<div class="r K"><i>2/2/2021 2:49:11 PM</i><i>Standard deviation move up from last Cl...</i><i>HMPT</i><i>1</i><i>Deviation=1</i></div>
<div class="r G"><i>2/2/2021 2:49:11 PM</i><i>Daily High</i><i>HMPT</i><i>7</i><i>Resistance price=11.765, Resistance date=2021/01/31</i></div>
<div class="r B"><i>2/2/2021 2:49:11 PM</i><i>Crossed above Open</i><i>SMTC</i><i>23</i><i>Seconds=43</i></div>
<div class="r G"><i>2/2/2021 2:49:10 PM</i><i>Daily High</i><i>ABB</i><i>55</i><i>Resistance price=32.21, Resistance date=2021/01/27</i></div>
<div class="r G"><i>2/2/2021 2:49:10 PM</i><i>Daily High</i><i>SII</i><i>34</i><i>Resistance price=31.87, Resistance date=2020/11/30</i></div>
<div class="r G"><i>2/2/2021 2:49:09 PM</i><i>Daily High</i><i>DLHC</i><i>10</i><i>Resistance price=11.275, Resistance date=2021/01/18</i></div>
<div class="r G"><i>2/2/2021 2:49:09 PM</i><i>Daily High</i><i>DLHC</i><i>9</i><i>Resistance price=11.275, Resistance date=2021/01/18</i></div>
<div class="r L"><i>2/2/2021 2:49:09 PM</i><i>Running up</i><i>OCGN</i><i>106</i><i>Momentum ratio=1.001</i></div>
<div class="r B"><i>2/2/2021 2:49:09 PM</i><i>Crossed above Open</i><i>FALN</i><i>10</i><i>Seconds=153</i></div>
<div class="r G"><i>2/2/2021 2:49:09 PM</i><i>Daily High</i><i>WIMI</i><i>8</i><i>Resistance price=9.30, Resistance date=2021/01/27</i></div>
<div class="r B"><i>2/2/2021 2:49:09 PM</i><i>Crossed above Open</i><i>CASS</i><i>7</i><i>Seconds=0</i></div>
<div class="r G"><i>2/2/2021 2:49:09 PM</i><i>Daily High</i><i>WIMI</i><i>7</i><i>Resistance price=9.30, Resistance date=2021/01/27</i></div>
<div class="r G"><i>2/2/2021 2:49:09 PM</i><i>Daily High</i><i>CAAS</i><i>4</i><i>Resistance price=6.86, Resistance date=2021/01/28</i></div>
<div class="r G"><i>2/2/2021 2:49:08 PM</i><i>Daily High</i><i>HEI/A</i><i>21</i><i>Resistance price=115.16, Resistance date=2021/01/25</i></div>
<div class="r B"><i>2/2/2021 2:49:08 PM</i><i>Crossed above Open</i><i>CEMI</i><i>3</i><i>Seconds=18113</i></div>
<div class="r B"><i>2/2/2021 2:49:08 PM</i><i>Crossed above Open</i><i>ASTE</i><i>5</i><i>Seconds=181</i></div>
<div class="r G"><i>2/2/2021 2:49:08 PM</i><i>Daily High</i><i>GBDC</i><i>34</i><i>Resistance price=14.88, Resistance date=2021/01/24</i></div>
<div class="r B"><i>2/2/2021 2:49:08 PM</i><i>Crossed above Open</i><i>BOH</i><i>28</i><i>Seconds=102</i></div>
<div class="r B"><i>2/2/2021 2:49:07 PM</i><i>Crossed above Open</i><i>NVO</i><i>23</i><i>Seconds=59</i></div>
</div>
<div class="a" style="left:991px;top:878px;width:16px;height:687px;background:#404040"></div>
<div class="a" style="left:993px;top:899px;width:12px;height:50px;background:#555;border:1px solid #666;box-sizing:border-box"></div>
<div class="a" style="left:993px;top:880px;width:12px;height:17px;background:#777"></div><div class="a" style="left:993px;top:1548px;width:12px;height:15px;background:#777"></div>
<svg style="left:993px;top:880px" width="12" height="684" fill="#ddd"><path d="M2 10l4-5 4 5zM2 673l4 5 4-5z"/></svg>

<!-- Account View1 -->
<div class="a" style="left:1014px;top:233px;width:984px;height:613px;background:#e8e8e8"></div>
<div class="a" style="left:1016px;top:236px;width:980px;height:30px;background:linear-gradient(#7e7e7e,#9a9a9a 60%,#8e8e8e)"></div>
<svg style="left:1021px;top:245px" width="15" height="15"><circle cx="7.500" cy="8" r="6.500" fill="#7ab0e8"/><path d="M7.500 8V1a6.500 6.500 0 0 1 6 4z" fill="#e89090"/><path d="M7.500 8L2 5a6.500 6.500 0 0 1 5.500-4z" fill="#f0e060"/></svg>
<div class="win" style="left:1041px;top:241px">Account View1</div>
<svg style="left:1924px;top:245px" width="62" height="14" stroke="#aaa" fill="none"><path d="M3 11h6"/><rect x="25" y="3" width="8" height="8"/><path d="M50 3l7 8M57 3l-7 8" stroke-width="1.500"/></svg>
<div class="a" style="left:1020px;top:266px;width:973px;height:29px;background:#f4f4f4"></div>
<div class="tab" style="left:1030px;top:271px;width:65px;background:linear-gradient(#e4eeff,#a9c0ea);clip-path:polygon(14% 0,100% 0,100% 100%,0 100%)">&nbsp;&nbsp;Positions</div>
<div class="tab" style="left:1096px;top:271px;width:72px;background:linear-gradient(#fff4d0,#fbd890)">Open Orders</div>
<div class="tab" style="left:1170px;top:271px;width:86px;background:linear-gradient(#eef2e6,#c8d4b4)">Trading Activity</div>
<div class="a" style="left:1020px;top:290px;width:973px;height:553px;background:#93aee0"></div>
<div class="a" style="left:1026px;top:295px;width:961px;height:545px;background:#fff;overflow:hidden"></div>
<div class="a" style="left:1866px;top:316px;width:1px;height:524px;background:#bbb"></div>
<div class="a" style="left:1968px;top:296px;width:17px;height:544px;background:#f2f2f2"></div>
<div class="a" style="left:1969px;top:313px;width:14px;height:485px;background:linear-gradient(90deg,#eee,#d8d8d8);border:1px solid #ccc;box-sizing:border-box"></div>
<svg style="left:1968px;top:296px" width="17" height="544" fill="#555"><path d="M4 11l5-6 5 6zM4 532l5 6 5-6z"/><path d="M5 250h8M5 253h8M5 256h8M5 259h8" stroke="#888"/></svg>

<div class="h" style="left:1027px;top:297px;width:941px;height:16px;grid-template-columns:106px 106px 90px 105px 93px 94px"><i>Account</i><i>Trading Provider</i><i>Account Value</i><i>Account Net P&amp;L</i><i>Account %P&amp;L</i><i>Position Count</i></div>
<div class="bx" style="left:1029px;top:316px;width:15px;height:17px">&minus;</div>
<div class="g o" style="left:1046px;top:316px;grid-template-columns:87px 102px 90px 103px 92px 92px;column-gap:1.500px"><i></i><i></i><i>2,654.199</i><i class="u">121.7948</i><i class="u">4.7884</i><i>7</i></div>
<svg style="left:1030px;top:334px" width="40" height="250" stroke="#aaa" fill="none"><path d="M7 0V125H17M33 135V155M33 155H37"/></svg>

<!-- P1 -->
<div class="h" style="left:1047px;top:336px;width:815px;grid-template-columns:169px 69px 105px 88px 106px 95px 92px 87px"><i>Symbol</i><i>Last</i><i>Position Quantity</i><i>Average Price</i><i>Position Net P&amp;L</i><i>Position %P&amp;L</i><i>Position Value</i><i>Position Type</i></div>
<div class="bx o" style="top:354px">+</div><div class="g o" style="top:354px;grid-template-columns:148px 68px 103px 87px 105px 93px 91px 84px"><i class="c">EBON</i><i>5.04</i><i>10</i><i>3.96</i><i class="u">10.8</i><i class="u">27.2727</i><i>50.4</i><i class="c">Long</i></div>
<div class="bx e" style="top:373px">+</div><div class="g e" style="top:373px;grid-template-columns:148px 68px 103px 87px 105px 93px 91px 84px"><i class="c">BAC</i><i class="hg">31.1074</i><i>10</i><i>31.75</i><i class="d">-6.426</i><i class="d">-2.0239</i><i>311.074</i><i class="c">Long</i></div>
<div class="bx o" style="top:392px">+</div><div class="g o" style="top:392px;grid-template-columns:148px 68px 103px 87px 105px 93px 91px 84px"><i class="c">BIOL</i><i class="hr">1.045</i><i>100</i><i>1.08</i><i class="d">-3.5</i><i class="d">-3.2407</i><i>104.5</i><i class="c">Long</i></div>
<div class="bx e" style="top:411px">+</div><div class="g e" style="top:411px;grid-template-columns:148px 68px 103px 87px 105px 93px 91px 84px"><i style="text-align:left">.F &nbsp; 210219C00014000</i><i></i><i>1</i><i>0.28</i><i>0.0</i><i>0.0</i><i>0.0</i><i class="c">Short</i></div>
<div class="bx o" style="top:430px">+</div><div class="g o" style="top:430px;grid-template-columns:148px 68px 103px 87px 105px 93px 91px 84px"><i style="text-align:left;padding-left:1px">.GE &nbsp; 210618C00016000</i><i></i><i>1</i><i>0.23</i><i>0.0</i><i>0.0</i><i>0.0</i><i class="c">Long</i></div>
<div class="bx e" style="top:449px">&minus;</div><div class="g e" style="top:449px;grid-template-columns:148px 68px 103px 87px 105px 93px 91px 84px"><i class="c">GE</i><i class="hg">11.225</i><i>1</i><i>11.3476</i><i class="d">-0.1226</i><i class="d">-1.0804</i><i>11.225</i><i class="c">Long</i></div>
<div class="h" style="top:468px;width:480px;grid-template-columns:58px 97px 59px 51px 86px 123px"><i>Quantity</i><i>Purchase Price</i><i>Net P&amp;L</i><i>%P&amp;L</i><i>Market Value</i><i>Time</i></div>
<div class="g o" style="top:487px;grid-template-columns:57px 96px 58px 50px 85px 123px;column-gap:1px"><i>1</i><i>11.3476</i><i class="d">-0.1226</i><i class="d">-1.0804</i><i>11.225</i><i class="c">01/23/2021 00:02:31</i></div>
<div class="bx o" style="top:511px">&minus;</div><div class="g o" style="top:511px;grid-template-columns:148px 68px 103px 87px 105px 93px 91px 84px"><i class="c">F</i><i class="hg">10.885</i><i>200</i><i>10.2798</i><i class="u">121.0434</i><i class="u">5.8874</i><i>2,177.0</i><i class="c">Long</i></div>
<div class="h" style="top:530px;width:480px;grid-template-columns:58px 97px 62px 48px 85px 122px"><i>Quantity</i><i>Purchase Price</i><i>Net P&amp;L</i><i>%P&amp;L</i><i>Market Value</i><i>Time</i></div>
<div class="g o" style="top:549px;grid-template-columns:57px 96px 60px 47px 84px 122px;column-gap:1px"><i>200</i><i>10.2798</i><i class="u">121.0434</i><i class="u">5.8874</i><i>2,177.0</i><i class="c">02/02/2021 14:22:45</i></div>
<div class="a" style="left:1047px;top:337px;width:814px;height:235px;border:1px solid #ccc;border-top:0;box-sizing:border-box;pointer-events:none"></div>
<svg style="left:1053px;top:468px" width="14" height="100" stroke="#bbb" fill="none"><path d="M3 0V22H14M3 43V85H14"/></svg>

<!-- Test Account -->
<div class="bx" style="left:1029px;top:578px;width:15px;height:17px">&minus;</div>
<div class="g e" style="left:1046px;top:578px;grid-template-columns:87px 102px 90px 103px 92px 92px;column-gap:1.500px"><i class="c">Test Account</i><i class="c">Virtual</i><i>63,338.274</i><i class="u">6,705.274</i><i class="u">11.8399</i><i>4</i></div>
<svg style="left:1030px;top:596px" width="40" height="300" stroke="#aaa" fill="none"><path d="M7 0V138H23"/></svg>
<div class="h" style="left:1047px;top:597px;width:739px;grid-template-columns:64px 95px 105px 89px 106px 95px 92px 91px"><i>Symbol</i><i>Last</i><i>Position Quantity</i><i>Average Price</i><i>Position Net P&amp;L</i><i>Position %P&amp;L</i><i>Position Value</i><i>Position Type</i></div>
<div class="bx o" style="top:616px">&minus;</div><div class="g o" style="top:616px;grid-template-columns:44px 95px 104px 89px 105px 93px 91px 85px;column-gap:1px"><i class="c">MSFT</i><i class="hr">241.24</i><i>100</i><i>215.23</i><i class="u">2,601.0</i><i class="u">12.0847</i><i>24,124.0</i><i class="c">Long</i></div>
<div class="h" style="top:635px;width:489px;grid-template-columns:58px 97px 58px 55px 86px 124px"><i>Quantity</i><i>Purchase Price</i><i>Net P&amp;L</i><i>%P&amp;L</i><i>Market Value</i><i>Time</i></div>
<div class="g o" style="top:654px;grid-template-columns:57px 96px 57px 54px 85px 123px;column-gap:1px"><i>100</i><i>215.23</i><i class="u">2,601.0</i><i class="u">12.0847</i><i>24,124.0</i><i class="c">01/06/2021 11:37:53</i></div>
<div class="bx e" style="top:678px">&minus;</div><div class="g e" style="top:678px;grid-template-columns:44px 95px 104px 89px 105px 93px 91px 85px;column-gap:1px"><i class="c">C</i><i>59.92</i><i>10</i><i>32.0</i><i class="u">279.2</i><i class="u">87.25</i><i>599.2</i><i class="c">Long</i></div>
<div class="h" style="top:697px;width:489px;grid-template-columns:58px 97px 58px 55px 86px 124px"><i>Quantity</i><i>Purchase Price</i><i>Net P&amp;L</i><i>%P&amp;L</i><i>Market Value</i><i>Time</i></div>
<div class="g o" style="top:716px;grid-template-columns:57px 96px 57px 54px 85px 123px;column-gap:1px"><i>10</i><i>32.0</i><i class="u">279.2</i><i class="u">87.25</i><i>599.2</i><i class="c">01/06/2021 11:42:16</i></div>
<div class="bx o" style="top:740px">&minus;</div><div class="g o" style="top:740px;grid-template-columns:44px 95px 104px 89px 105px 93px 91px 85px;column-gap:1px"><i class="c">SPY</i><i class="hg">383.04</i><i>100</i><i>345.0</i><i class="u">3,804.0</i><i class="u">11.0261</i><i>38,304.0</i><i class="c">Long</i></div>
<div class="h" style="top:759px;width:489px;grid-template-columns:58px 97px 58px 55px 86px 124px"><i>Quantity</i><i>Purchase Price</i><i>Net P&amp;L</i><i>%P&amp;L</i><i>Market Value</i><i>Time</i></div>
<div class="g o" style="top:778px;grid-template-columns:57px 96px 57px 54px 85px 123px;column-gap:1px"><i>100</i><i>345.0</i><i class="u">3,804.0</i><i class="u">11.0261</i><i>38,304.0</i><i class="c">01/06/2021 11:40:29</i></div>
<div class="bx e" style="top:802px">&minus;</div><div class="g e" style="top:802px;grid-template-columns:44px 95px 104px 89px 105px 93px 91px 85px;column-gap:1px"><i class="c">BAC</i><i>31.1074</i><i>10</i><i>29.0</i><i class="u">21.074</i><i class="u">7.2669</i><i>311.074</i><i class="c">Long</i></div>
<div class="h" style="top:821px;width:481px;grid-template-columns:58px 97px 58px 48px 86px 124px"><i>Quantity</i><i>Purchase Price</i><i>Net P&amp;L</i><i>%P&amp;L</i><i>Market Value</i><i>Time</i></div>
<svg style="left:1053px;top:634px" width="14" height="204" stroke="#bbb" fill="none"><path d="M3 0V21H14M3 63V83H14M3 125V145H14M3 187V204"/></svg>
<div class="a" style="left:1014px;top:843px;width:984px;height:5px;background:#f2f2f2"></div>

<!-- Account View2 -->
<div class="a" style="left:1012px;top:848px;width:990px;height:746px;background:#2a2a2a"></div>
<div class="a" style="left:1014px;top:852px;width:984px;height:30px;background:linear-gradient(#3a3e44,#222 50%,#2e2e2e)"></div>
<svg style="left:1018px;top:862px" width="15" height="16"><circle cx="7.500" cy="8" r="6.500" fill="#7ab0e8"/><path d="M7.500 8V1a6.500 6.500 0 0 1 6 4z" fill="#e89090"/><path d="M7.500 8L2 5a6.500 6.500 0 0 1 5.500-4z" fill="#f0e060"/></svg>
<div class="win" style="left:1039px;top:860px;color:#eee">Account View2</div>
<svg style="left:1924px;top:862px" width="62" height="14" stroke="#bbb" fill="none"><path d="M3 11h6"/><rect x="25" y="3" width="8" height="8"/><path d="M50 3l7 8M57 3l-7 8" stroke-width="1.500"/></svg>
<div class="a" style="left:1018px;top:882px;width:975px;height:708px;background:#f2f2f2"></div>
<div class="tab" style="left:1026px;top:890px;width:66px;height:18px;background:linear-gradient(#e4eeff,#a9c0ea);clip-path:polygon(14% 0,100% 0,100% 100%,0 100%);line-height:18px">&nbsp;&nbsp;Positions</div>
<div class="tab" style="left:1093px;top:890px;width:73px;height:18px;background:linear-gradient(#fff4d0,#fbd890);line-height:18px">Open Orders</div>
<div class="tab" style="left:1167px;top:890px;width:88px;height:18px;background:linear-gradient(#eef2e6,#c2d0ac);line-height:18px">Trading Activity</div>
<div class="a" style="left:1018px;top:908px;width:975px;height:681px;background:#bac7a4"></div>
<div class="a" style="left:1025px;top:914px;width:961px;height:668px;background:#fff;box-shadow:0 1px 0 #aaa"></div>
<div class="a" style="left:1170px;top:914px;width:1px;height:668px;background:#ccc"></div>

<!-- Calendars -->
<div class="hl" style="left:1076px;top:974px;width:80px;height:15px"></div>
<div class="hl" style="left:1044px;top:989px;width:112px;height:45px"></div>
<div class="hl" style="left:1044px;top:1085px;width:96px;height:16px"></div>
<div class="a" style="left:1060px;top:1086px;width:15px;height:15px;border:1px solid #b85a00;box-sizing:border-box"></div>
<div class="cm" style="top:925px">January 2021</div>
<svg style="left:1033px;top:928px" width="125" height="12" fill="#888"><path d="M5 1L1 6l4 5zM119 1l4 5-4 5z"/></svg>
<div class="cd" style="top:943px"><i>M</i><i>T</i><i>W</i><i>T</i><i>F</i><i>S</i><i>S</i></div>
<div class="a" style="left:1042px;top:958px;width:116px;height:1px;background:#999"></div>
<div class="a" style="left:1042px;top:959px;width:1px;height:75px;background:#ccc"></div>
<div class="wk" style="top:960px">1</div><div class="cd" style="top:960px"><i class="m">28</i><i class="m">29</i><i class="m">30</i><i class="m">31</i><i>1</i><i>2</i><i>3</i></div>
<div class="wk" style="top:975px">2</div><div class="cd" style="top:975px"><i>4</i><i>5</i><i>6</i><i>7</i><i>8</i><i>9</i><i>10</i></div>
<div class="wk" style="top:990px">3</div><div class="cd" style="top:990px"><i>11</i><i>12</i><i>13</i><i>14</i><i>15</i><i>16</i><i>17</i></div>
<div class="wk" style="top:1005px">4</div><div class="cd" style="top:1005px"><i>18</i><i>19</i><i>20</i><i>21</i><i>22</i><i>23</i><i>24</i></div>
<div class="wk" style="top:1020px">5</div><div class="cd" style="top:1020px"><i>25</i><i>26</i><i>27</i><i>28</i><i>29</i><i>30</i><i>31</i></div>

<div class="cm" style="top:1051px">February 2021</div>
<div class="cd" style="top:1069px"><i>M</i><i>T</i><i>W</i><i>T</i><i>F</i><i>S</i><i>S</i></div>
<div class="a" style="left:1042px;top:1084px;width:116px;height:1px;background:#999"></div>
<div class="a" style="left:1042px;top:1085px;width:1px;height:60px;background:#ccc"></div>
<div class="wk" style="top:1086px">6</div><div class="cd" style="top:1086px"><i>1</i><i>2</i><i>3</i><i>4</i><i>5</i><i>6</i><i>7</i></div>
<div class="wk" style="top:1101px">7</div><div class="cd" style="top:1101px"><i>8</i><i>9</i><i>10</i><i>11</i><i>12</i><i>13</i><i>14</i></div>
<div class="wk" style="top:1116px">8</div><div class="cd" style="top:1116px"><i>15</i><i>16</i><i>17</i><i>18</i><i>19</i><i>20</i><i>21</i></div>
<div class="wk" style="top:1131px">9</div><div class="cd" style="top:1131px"><i>22</i><i>23</i><i>24</i><i>25</i><i>26</i><i>27</i><i>28</i></div>

<div class="cm" style="top:1177px">March 2021</div>
<div class="cd" style="top:1195px"><i>M</i><i>T</i><i>W</i><i>T</i><i>F</i><i>S</i><i>S</i></div>
<div class="a" style="left:1042px;top:1210px;width:116px;height:1px;background:#999"></div>
<div class="a" style="left:1042px;top:1211px;width:1px;height:75px;background:#ccc"></div>
<div class="wk" style="top:1212px">10</div><div class="cd" style="top:1212px"><i>1</i><i>2</i><i>3</i><i>4</i><i>5</i><i>6</i><i>7</i></div>
<div class="wk" style="top:1227px">11</div><div class="cd" style="top:1227px"><i>8</i><i>9</i><i>10</i><i>11</i><i>12</i><i>13</i><i>14</i></div>
<div class="wk" style="top:1242px">12</div><div class="cd" style="top:1242px"><i>15</i><i>16</i><i>17</i><i>18</i><i>19</i><i>20</i><i>21</i></div>
<div class="wk" style="top:1257px">13</div><div class="cd" style="top:1257px"><i>22</i><i>23</i><i>24</i><i>25</i><i>26</i><i>27</i><i>28</i></div>
<div class="wk" style="top:1272px">14</div><div class="cd" style="top:1272px"><i>29</i><i>30</i><i>31</i></div>

<div class="cm" style="top:1303px">April 2021</div>
<div class="cd" style="top:1321px"><i>M</i><i>T</i><i>W</i><i>T</i><i>F</i><i>S</i><i>S</i></div>
<div class="a" style="left:1042px;top:1336px;width:116px;height:1px;background:#999"></div>
<div class="a" style="left:1042px;top:1337px;width:1px;height:75px;background:#ccc"></div>
<div class="wk" style="top:1338px">14</div><div class="cd" style="top:1338px"><i></i><i></i><i></i><i>1</i><i>2</i><i>3</i><i>4</i></div>
<div class="wk" style="top:1353px">15</div><div class="cd" style="top:1353px"><i>5</i><i>6</i><i>7</i><i>8</i><i>9</i><i>10</i><i>11</i></div>
<div class="wk" style="top:1368px">16</div><div class="cd" style="top:1368px"><i>12</i><i>13</i><i>14</i><i>15</i><i>16</i><i>17</i><i>18</i></div>
<div class="wk" style="top:1383px">17</div><div class="cd" style="top:1383px"><i>19</i><i>20</i><i>21</i><i>22</i><i>23</i><i>24</i><i>25</i></div>
<div class="wk" style="top:1398px">18</div><div class="cd" style="top:1398px"><i>26</i><i>27</i><i>28</i><i>29</i><i>30</i></div>

<div class="cm" style="top:1429px">May 2021</div>
<div class="cd" style="top:1447px"><i>M</i><i>T</i><i>W</i><i>T</i><i>F</i><i>S</i><i>S</i></div>
<div class="a" style="left:1042px;top:1462px;width:116px;height:1px;background:#999"></div>
<div class="a" style="left:1042px;top:1463px;width:1px;height:90px;background:#ccc"></div>
<div class="wk" style="top:1464px">18</div><div class="cd" style="top:1464px"><i></i><i></i><i></i><i></i><i></i><i>1</i><i>2</i></div>
<div class="wk" style="top:1479px">19</div><div class="cd" style="top:1479px"><i>3</i><i>4</i><i>5</i><i>6</i><i>7</i><i>8</i><i>9</i></div>
<div class="wk" style="top:1494px">20</div><div class="cd" style="top:1494px"><i>10</i><i>11</i><i>12</i><i>13</i><i>14</i><i>15</i><i>16</i></div>
<div class="wk" style="top:1509px">21</div><div class="cd" style="top:1509px"><i>17</i><i>18</i><i>19</i><i>20</i><i>21</i><i>22</i><i>23</i></div>
<div class="wk" style="top:1524px">22</div><div class="cd" style="top:1524px"><i>24</i><i>25</i><i>26</i><i>27</i><i>28</i><i>29</i><i>30</i></div>
<div class="wk" style="top:1539px">23</div><div class="cd" style="top:1539px"><i>31</i><i class="m">1</i><i class="m">2</i><i class="m">3</i><i class="m">4</i><i class="m">5</i><i class="m">6</i></div>
<div class="a" style="left:1051px;top:1555px;width:42px;height:19px;background:linear-gradient(#eee,#ccd);border:1px solid #aab;box-sizing:border-box;text-align:center;line-height:18px;border-radius:2px;font-size:11.6px">Today</div>
<div class="a" style="left:1103px;top:1555px;width:42px;height:19px;background:linear-gradient(#eee,#ccd);border:1px solid #aab;box-sizing:border-box;text-align:center;line-height:18px;border-radius:2px;font-size:11.6px">None</div>

<!-- orders -->
<div class="h" style="left:1171px;top:916px;width:814px;height:16px;grid-template-columns:123px 78px 85px"><i style="text-align:left;padding-left:10px;box-sizing:border-box">Date/Time &nbsp;<span style="color:#aaa">&#9650;</span></i><i>Activity Type</i><i>Account</i></div>
<div class="row2 o" style="top:934px"><i>01/06/2021 10:16:53</i><i>Error</i><i style="left:205px">N</i><i>Please be advised, quote view and charts are active and functioning.</i></div>
<div class="row2 e" style="top:953px"><i>01/06/2021 10:16:53</i><i>New Order</i><i style="left:205px">N</i><i>Symbol: BAC, Action: Buy, Quantity: 100, Filled Quantity: 0, Order Type: Limit, Limit Price: 10.00, Time: 01/06/2021</i></div>
<div class="row2 o" style="top:972px"><i>01/06/2021 11:37:53</i><i>Execution</i><i>Test Account</i><i>Symbol: MSFT, Action: Buy, Quantity: 100, Price: 215.23, OrderID: RANDOM20210106103741974</i></div>
<div class="row2 e" style="top:991px"><i>01/06/2021 11:37:53</i><i>New Order</i><i>Test Account</i><i>Symbol: MSFT, Action: Buy, Quantity: 100, Filled Quantity: 100, Order Type: Limit, Limit Price: 215.23</i></div>
<div class="row2 o" style="top:1010px"><i>01/06/2021 11:38:02</i><i>New Order</i><i>Test Account</i><i>Symbol: BAC, Action: Buy, Quantity: 100, Filled Quantity: 100, Order Type: Limit, Limit Price: 32.34</i></div>
<div class="row2 e" style="top:1029px"><i>01/06/2021 11:38:02</i><i>Execution</i><i>Test Account</i><i>Symbol: BAC, Action: Buy, Quantity: 100, Price: 32.34, OrderID: RANDOM20210106103751575.2</i></div>
<div class="row2 o" style="top:1048px"><i>01/06/2021 11:38:19</i><i>Execution</i><i>Test Account</i><i>Symbol: SPY, Action: Buy, Quantity: 100, Price: 320.00, OrderID: RANDOM20210106103808525.4</i></div>
<div class="row2 e" style="top:1067px"><i>01/06/2021 11:38:19</i><i>New Order</i><i>Test Account</i><i>Symbol: SPY, Action: Buy, Quantity: 100, Filled Quantity: 100, Order Type: Limit, Limit Price: 320.00</i></div>
<div class="row2 o" style="top:1086px"><i>01/06/2021 11:39:59</i><i>Execution</i><i>Test Account</i><i>Symbol: BAC, Action: Buy, Quantity: 100, Price: 32.00, OrderID: RANDOM20210106103948584.6</i></div>
<div class="row2 e" style="top:1105px"><i>01/06/2021 11:39:59</i><i>New Order</i><i>Test Account</i><i>Symbol: BAC, Action: Buy, Quantity: 100, Filled Quantity: 100, Order Type: Limit, Limit Price: 32.00</i></div>
<div class="row2 o" style="top:1124px"><i>01/06/2021 11:40:13</i><i>New Order</i><i>Test Account</i><i>Symbol: BAC, Action: Buy, Quantity: 100, Filled Quantity: 100, Order Type: Limit, Limit Price: 29.00</i></div>
<div class="row2 e" style="top:1143px"><i>01/06/2021 11:40:13</i><i>Execution</i><i>Test Account</i><i>Symbol: BAC, Action: Buy, Quantity: 100, Price: 29.00, OrderID: RANDOM20210106104002582.8</i></div>
<div class="row2 o" style="top:1162px"><i>01/06/2021 11:40:29</i><i>Execution</i><i>Test Account</i><i>Symbol: SPY, Action: Buy, Quantity: 100, Price: 345.00, OrderID: RANDOM20210106104018243.</i></div>
<div class="row2 e" style="top:1181px"><i>01/06/2021 11:40:29</i><i>New Order</i><i>Test Account</i><i>Symbol: SPY, Action: Buy, Quantity: 100, Filled Quantity: 100, Order Type: Limit, Limit Price: 345.00</i></div>
<div class="row2 o" style="top:1200px"><i>01/06/2021 11:41:41</i><i>Error</i><i>Test Account</i><i>Insufficient buying power</i></div>
<div class="row2 e" style="top:1219px"><i>01/06/2021 11:41:41</i><i>New Order</i><i>Test Account</i><i>Symbol: INTC, Action: Buy, Quantity: 100, Filled Quantity: 0, Order Type: Limit, Limit Price: 51.20, Time</i></div>
<div class="row2 o" style="top:1238px"><i>01/06/2021 11:41:59</i><i>Execution</i><i>Test Account</i><i>Symbol: BAC, Action: Buy, Quantity: 10, Price: 29.00, OrderID: RANDOM20210106104148711.12</i></div>
<div class="row2 e" style="top:1257px"><i>01/06/2021 11:41:59</i><i>New Order</i><i>Test Account</i><i>Symbol: BAC, Action: Buy, Quantity: 10, Filled Quantity: 10, Order Type: Limit, Limit Price: 29.00, Time</i></div>
<div class="row2 o" style="top:1276px"><i>01/06/2021 11:42:16</i><i>Execution</i><i>Test Account</i><i>Symbol: C, Action: Buy, Quantity: 10, Price: 32.00, OrderID: RANDOM20210106104204113.14</i></div>
<div class="row2 e" style="top:1295px"><i>01/06/2021 11:42:16</i><i>New Order</i><i>Test Account</i><i>Symbol: C, Action: Buy, Quantity: 10, Filled Quantity: 10, Order Type: Limit, Limit Price: 32.00, Time: 01/06</i></div>
<div class="a" style="left:1172px;top:1314px;width:813px;height:1px;background:#aaa"></div>
<div class="a" style="left:1380px;top:936px;width:75px;height:17px;background:#e8e8e8"></div>
<div class="a" style="left:1380px;top:955px;width:72px;height:15px;background:#eee"></div>
<div class="a" style="left:1171px;top:1566px;width:815px;height:16px;background:#f2f2f2"></div>
<div class="a" style="left:1188px;top:1567px;width:338px;height:15px;background:linear-gradient(#f2f2f4,#c8cace);border:1px solid #999;box-sizing:border-box;border-radius:2px"></div>
<svg style="left:1175px;top:1568px" width="810" height="14"><path d="M7 2L3 7l4 5zM793 2l4 5-4 5z" fill="#444"/><path d="M169 3v8M171 3v8M173 3v8M175 3v8" stroke="#888"/></svg>

<!-- page tabs -->
<div class="a" style="left:0;top:1598px;width:2002px;height:24px;background:#555"></div>
<div class="pg" style="left:38px">Page 1</div>
<div class="pg" style="left:87px">Page 2</div>
<div class="pg" style="left:136px">Page 3</div>
<div class="pg" style="left:185px">Page 4</div>
<div class="a" style="left:229px;top:1600px;width:50px;height:21px;background:linear-gradient(#e8eef0,#fff);border-radius:0 0 3px 3px;text-align:center;font-weight:bold;line-height:22px;color:#000;font-size:11.4px">Page 5</div>
<div class="pg" style="left:288px">Page 6</div>
<div class="pg" style="left:337px">Page 7</div>
<div class="pg" style="left:386px">Page 8</div>
<div class="pg" style="left:435px">Page 9</div>
<svg style="left:1962px;top:1604px" width="34" height="14" fill="none" stroke="#ddd"><path d="M6 2L2 7l4 5zM14 2l4 5-4 5z"/><path d="M25 3l7 9M32 3l-7 9" stroke="#fff" stroke-width="1.500"/></svg>

<!-- status bar -->
<div class="a" style="left:0;top:1622px;width:1398px;height:24px;background:linear-gradient(#50545a,#3c3c3c 35%,#2e2e2e)"></div>
<div class="a" style="left:1398px;top:1622px;width:604px;height:24px;background:linear-gradient(#565a5e,#8f9498 25%,#6a6e72 60%,#3e4042)"></div>
<div class="t" style="left:4px;top:1628px;color:#ddd;font-size:11.4px">Ready</div>
<div class="st sb" style="left:841px;width:184px;padding-left:21px;font-size:10.6px"><span class="up">&#8593;</span>$DJI 30796.19 +584.28(+1.93%)</div>
<div class="st sb" style="left:1029px;width:193px;padding-left:20px;font-size:10.6px"><span class="up">&#8593;</span>$NASX 13650.44 +247.05(+1.84%)</div>
<div class="st sb" style="left:1226px;width:172px;padding-left:20px;font-size:10.6px"><span class="up">&#8593;</span>$SPX 3841.68 +67.82(+1.80%)</div>
<div class="st" style="left:1404px;color:#eee">Acct: Test Account</div>
<div class="st" style="left:1506px;color:#eee">BP: $2033.00</div>
<div class="st sb" style="left:1576px;width:82px;padding-left:2px;font-size:10.8px">P&amp;L:+$6705.91</div>
<div class="dot" style="left:1667px"></div>
<div class="st" style="left:1682px;color:#eee">Virtual</div>
<div class="dot" style="left:1729px"></div>
<div class="st" style="left:1745px;color:#eee;font-size:10.5px">ActiveTick (0.92KB/s Q077/T026)</div>
<div class="st" style="left:1915px;color:#eee;font-size:10.7px">14:49:17 EST</div>
<svg style="left:1988px;top:1632px" width="12" height="12" fill="#bbb"><path d="M8 0h2v2H8zM4 4h2v2H4zM8 4h2v2H8zM0 8h2v2H0zM4 8h2v2H4zM8 8h2v2H8z"/></svg>
</body></html>
